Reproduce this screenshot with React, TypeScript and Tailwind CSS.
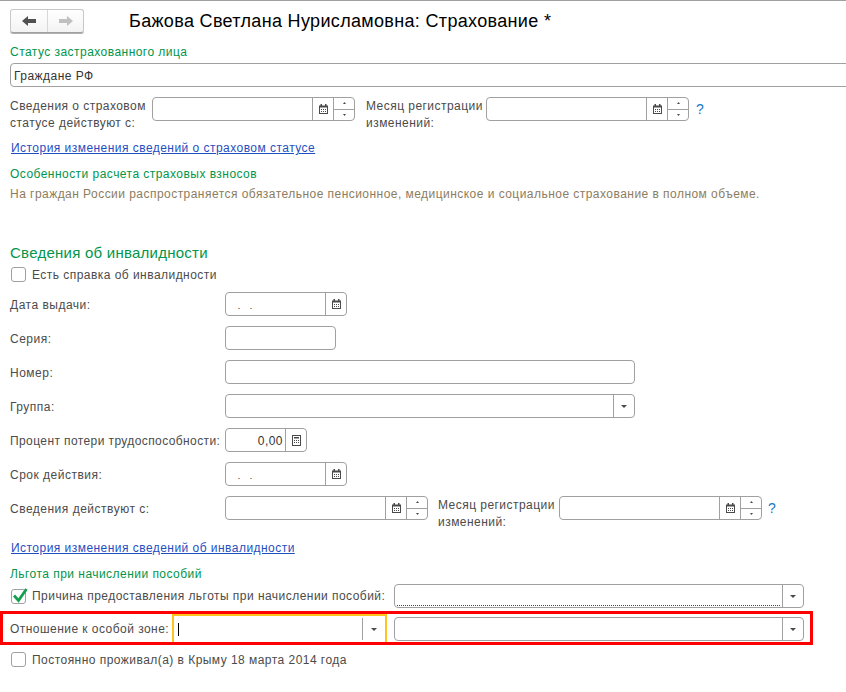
import React from "react";

const Calendar = () => (
  <svg width="9" height="10" viewBox="0 0 9 10" className="block">
    <path d="M0 1.5h1.5V0h1.5v1.5h3V0h1.5v1.5H9V10H0z" fill="#4a4a4a" />
    <rect x="1" y="3.5" width="7" height="5.5" fill="#fff" />
    <path d="M2 5h1v1H2zM4 5h1v1H4zM6 5h1v1H6zM2 7h1v1H2zM4 7h1v1H4zM6 7h1v1H6z" fill="#4a4a4a" />
  </svg>
);

const Calc = () => (
  <svg width="9" height="11" viewBox="0 0 9 11" className="block">
    <rect x="0.5" y="0.5" width="8" height="10" fill="#fff" stroke="#4a4a4a" />
    <rect x="2" y="2" width="5" height="1.5" fill="#4a4a4a" />
    <path d="M2 5h1v1H2zM4 5h1v1H4zM6 5h1v1H6zM2 7h1v1H2zM4 7h1v1H4zM6 7h1v1H6z" fill="#4a4a4a" />
  </svg>
);

const Down = () => (
  <svg width="6" height="3" viewBox="0 0 6 3" className="block">
    <path d="M0 0h6L3 3z" fill="#4a4a4a" />
  </svg>
);

const Spin = () => (
  <div className="flex flex-col w-[21px] h-full border-l border-[#a0a0a0]">
    <div className="flex-1 flex items-center justify-center border-b border-[#a0a0a0]">
      <svg width="3" height="2" viewBox="0 0 3 2" className="block"><path d="M0 2h3L1.5 0z" fill="#4a4a4a" /></svg>
    </div>
    <div className="flex-1 flex items-center justify-center">
      <svg width="3" height="2" viewBox="0 0 3 2" className="block"><path d="M0 0h3L1.5 2z" fill="#4a4a4a" /></svg>
    </div>
  </div>
);

const Box = ({ w, children, mask }: { w: number; children?: React.ReactNode; mask?: boolean }) => (
  <div className="h-[24px] border border-[#a0a0a0] rounded-[4px] bg-white flex shrink-0 overflow-hidden" style={{ width: w }}>
    {mask ? (
      <div className="flex-1 relative">
        <span className="absolute left-[12px] top-[15px] w-[2px] h-px bg-[#c09a60]" />
        <span className="absolute left-[24px] top-[15px] w-[2px] h-px bg-[#c09a60]" />
      </div>
    ) : (
      <div className="flex-1" />
    )}
    {children}
  </div>
);

const BtnCell = ({ children }: { children: React.ReactNode }) => (
  <div className="w-[21px] h-full border-l border-[#a0a0a0] flex items-center justify-center">{children}</div>
);

const DateSpin = () => (
  <Box w={203}>
    <BtnCell><Calendar /></BtnCell>
    <Spin />
  </Box>
);

const DateMask = () => (
  <Box w={122} mask>
    <BtnCell><Calendar /></BtnCell>
  </Box>
);

const Combo = ({ w }: { w: number }) => (
  <Box w={w}>
    <BtnCell><Down /></BtnCell>
  </Box>
);

const Check = ({ checked }: { checked?: boolean }) => (
  <div className="relative w-[15px] h-[15px] ml-px border border-[#a0a0a0] rounded-[3px] bg-white shrink-0">
    {checked && (
      <svg width="15" height="14" viewBox="0 0 15 14" className="absolute left-0 top-0 overflow-visible">
        <path d="M2 5.5L6.5 10.5L14.5 -1" fill="none" stroke="#12a04f" strokeWidth="2.8" />
      </svg>
    )}
  </div>
);

const Label = ({ children, tight }: { children: React.ReactNode; tight?: boolean }) => (
  <div className={"w-[215px] shrink-0 h-[24px] leading-[26px] whitespace-nowrap " + (tight ? "tracking-[0.4px]" : "tracking-[0.5px]")}>{children}</div>
);

const Green = ({ children, className = "" }: { children: React.ReactNode; className?: string }) => (
  <div className={"h-[16px] leading-[18px] text-[#00964b] tracking-[0.46px] " + className}>{children}</div>
);

const HistLink = ({ children, className = "" }: { children: React.ReactNode; className?: string }) => (
  <div className={"h-[16px] leading-[18px] ml-px " + className}>
    <a className="text-[#1f4fbf] underline tracking-[0.46px]">{children}</a>
  </div>
);

const Two = ({ a, b, w }: { a: string; b: string; w: number }) => (
  <div className="shrink-0 pt-px leading-[17px] tracking-[0.46px] whitespace-nowrap" style={{ width: w }}>
    {a}<br />{b}
  </div>
);

export default function App() {
  return (
    <div className="w-[846px] h-[692px] overflow-hidden bg-white border-t border-[#a0a0a0] text-[12px] text-[#4b4b4b] font-['Liberation_Sans',Arial,sans-serif]">
      <div className="pl-[10px]">
        <div className="flex items-center mt-[8px] h-[24px]">
          <div className="flex w-[74px] h-[24px] rounded-[3px] border border-[#c8c8c8] border-b-[#a0a0a0] bg-gradient-to-b from-white to-[#f3f3f3] shadow-[0_1px_0_#b0b0b0]">
            <div className="w-[37px] flex items-center justify-center border-r border-[#d8d8d8]">
              <svg width="14" height="10" viewBox="0 0 14 10" className="block"><path d="M0 5L6 0v3h8v4H6v3z" fill="#505050" /></svg>
            </div>
            <div className="flex-1 flex items-center justify-center">
              <svg width="14" height="10" viewBox="0 0 14 10" className="block"><path d="M14 5L8 0v3H0v4h8v3z" fill="#c0c0c0" /></svg>
            </div>
          </div>
          <div className="ml-[45px] text-[18px] leading-[24px] tracking-[0.33px] text-black whitespace-nowrap">Бажова Светлана Нурисламовна: Страхование *</div>
        </div>

        <Green className="mt-[10px]">Статус застрахованного лица</Green>
        <div className="mt-[4px] h-[24px] w-[860px] border border-[#a0a0a0] rounded-l-[4px] pl-[3px] leading-[24px] tracking-[0.46px] text-[#333]">Граждане РФ</div>

        <div className="flex mt-[10px] h-[33px]">
          <Two w={142} a="Сведения о страховом" b="статусе действуют с:" />
          <DateSpin />
          <div className="w-[11px]" />
          <Two w={120} a="Месяц регистрации" b="изменений:" />
          <DateSpin />
          <div className="ml-[7px] h-[24px] leading-[24px] text-[14px] text-[#1a7ac4]">?</div>
        </div>

        <HistLink className="mt-[9px]">История изменения сведений о страховом статусе</HistLink>
        <Green className="mt-[10px]">Особенности расчета страховых взносов</Green>
        <div className="mt-[4px] h-[16px] leading-[18px] text-[#8c7d60] tracking-[0.46px] whitespace-nowrap">На граждан России распространяется обязательное пенсионное, медицинское и социальное страхование в полном объеме.</div>

        <div className="mt-[42px] h-[20px] leading-[20px] text-[15px] tracking-[0.25px] text-[#00964b]">Сведения об инвалидности</div>

        <div className="flex items-center mt-[4px] h-[15px]">
          <Check />
          <span className="ml-[6px] tracking-[0.46px]">Есть справка об инвалидности</span>
        </div>

        <div className="flex mt-[10px]"><Label>Дата выдачи:</Label><DateMask /></div>
        <div className="flex mt-[10px]"><Label>Серия:</Label><Box w={111} /></div>
        <div className="flex mt-[10px]"><Label>Номер:</Label><Box w={410} /></div>
        <div className="flex mt-[10px]"><Label>Группа:</Label><Combo w={410} /></div>
        <div className="flex mt-[10px]">
          <Label tight>Процент потери трудоспособности:</Label>
          <div className="h-[24px] w-[82px] border border-[#a0a0a0] rounded-[4px] flex shrink-0">
            <div className="flex-1 text-right pr-[2px] leading-[24px] text-[#333] tracking-[0.46px]">0,00</div>
            <BtnCell><Calc /></BtnCell>
          </div>
        </div>
        <div className="flex mt-[10px]"><Label>Срок действия:</Label><DateMask /></div>
        <div className="flex mt-[10px] h-[33px]">
          <Label>Сведения действуют с:</Label>
          <DateSpin />
          <div className="w-[10px]" />
          <Two w={121} a="Месяц регистрации" b="изменений:" />
          <DateSpin />
          <div className="ml-[6px] h-[24px] leading-[24px] text-[14px] text-[#1a7ac4]">?</div>
        </div>

        <HistLink className="mt-[10px]">История изменения сведений об инвалидности</HistLink>
        <Green className="mt-[10px]">Льгота при начислении пособий</Green>

        <div className="flex items-center mt-[3px] h-[24px]">
          <Check checked />
          <span className="ml-[6px] w-[362px] tracking-[0.46px] whitespace-nowrap">Причина предоставления льготы при начислении пособий:</span>
          <div className="relative">
            <Combo w={410} />
            <div className="absolute left-[3px] top-[21px] w-[383px] border-t border-dotted border-[#b0182f]" />
          </div>
        </div>
      </div>

      <div className="flex items-stretch mt-[3px] w-[813px] h-[34px] border-[3px] border-[#ff0000] pl-[7px]">
        <div className="w-[162px] leading-[30px] tracking-[0.46px] whitespace-nowrap">Отношение к особой зоне:</div>
        <div className="w-[215px] h-[28px] border-2 border-b-0 border-[#ffc31f] flex">
          <div className="flex-1 flex items-center pl-[4px]"><div className="w-px h-[13px] bg-black" /></div>
          <div className="w-[23px] my-[2px] border-l border-[#a0a0a0] flex items-center justify-start pl-[8px]"><Down /></div>
        </div>
        <div className="ml-[7px] mt-[3px]"><Combo w={410} /></div>
      </div>

      <div className="flex items-center pl-[10px] mt-[7px] h-[15px]">
        <Check />
        <span className="ml-[6px] pt-px tracking-[0.46px]">Постоянно проживал(а) в Крыму 18 марта 2014 года</span>
      </div>
    </div>
  );
}
